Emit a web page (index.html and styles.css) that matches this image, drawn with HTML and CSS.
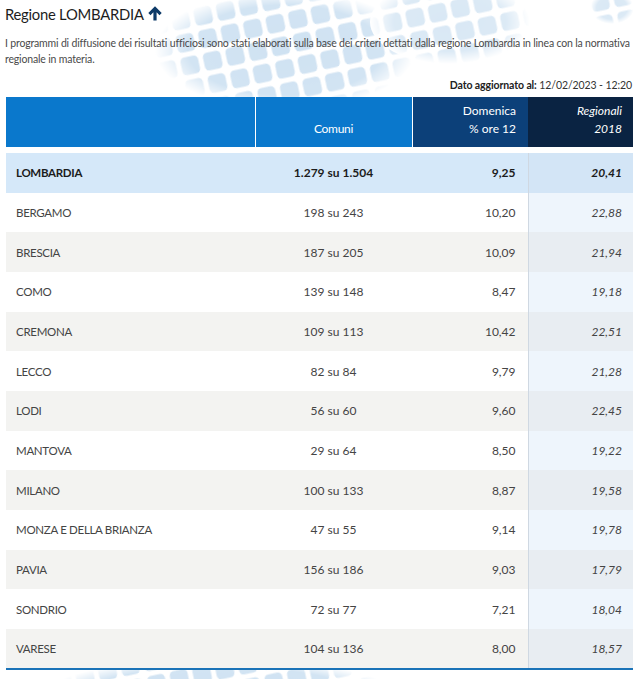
FILE: index.html
```html
<!DOCTYPE html>
<html lang="it">
<head>
<meta charset="utf-8">
<title>Regione LOMBARDIA</title>
<link rel="stylesheet" href="styles.css">
</head>
<body>
<div class="bg" aria-hidden="true">
  <svg width="640" height="679" viewBox="0 0 640 679">
    <defs>
      <pattern id="sq" patternUnits="userSpaceOnUse" width="23" height="23" patternTransform="rotate(-12)">
        <rect x="2.5" y="2.5" width="18" height="18" rx="4.5" fill="#cfe2f2"/>
      </pattern>
      <radialGradient id="rg">
        <stop offset="0" stop-color="#fff"/>
        <stop offset="0.75" stop-color="#eee"/>
        <stop offset="1" stop-color="#000"/>
      </radialGradient>
      <radialGradient id="rg2">
        <stop offset="0" stop-color="#ccc"/>
        <stop offset="0.7" stop-color="#bbb"/>
        <stop offset="1" stop-color="#000"/>
      </radialGradient>
      <mask id="m" maskUnits="userSpaceOnUse" x="0" y="0" width="640" height="679">
        <rect width="640" height="679" fill="#000"/>
        <ellipse cx="285" cy="50" rx="130" ry="60" fill="url(#rg)"/>
        <ellipse cx="450" cy="22" rx="80" ry="42" fill="url(#rg2)"/>
        <ellipse cx="612" cy="8" rx="22" ry="16" fill="url(#rg2)"/>
        <ellipse cx="220" cy="690" rx="170" ry="30" fill="url(#rg)"/>
      </mask>
    </defs>
    <rect width="640" height="679" fill="url(#sq)" mask="url(#m)"/>
  </svg>
</div>
<main class="page">
  <h1 class="title"><span>Regione LOMBARDIA</span>
    <svg class="arrow" width="14" height="15" viewBox="0 0 14 15" aria-hidden="true">
      <path d="M7 0.3 L13.7 7 L11.5 9.2 L8.6 6.3 V14.6 H5.4 V6.3 L2.5 9.2 L0.3 7 Z" fill="#0d3a68"/>
    </svg>
  </h1>
  <p class="desc">I programmi di diffusione dei risultati ufficiosi sono stati elaborati sulla base dei criteri dettati dalla regione Lombardia in linea con la normativa regionale in materia.</p>
  <p class="updated"><b>Dato aggiornato al:</b> 12/02/2023 - 12:20</p>
  <table class="results">
    <colgroup>
      <col class="w-name"><col class="w-com"><col class="w-dom"><col class="w-reg">
    </colgroup>
    <thead>
      <tr>
        <th class="h-name"></th>
        <th class="h-com">Comuni</th>
        <th class="h-dom">Domenica<br>% ore 12</th>
        <th class="h-reg">Regionali<br>2018</th>
      </tr>
    </thead>
    <tbody>
      <tr class="spacer"><td colspan="4"></td></tr>
      <tr class="total"><td class="name">LOMBARDIA</td><td class="com">1.279 su 1.504</td><td class="dom">9,25</td><td class="reg">20,41</td></tr>
      <tr><td class="name">BERGAMO</td><td class="com">198 su 243</td><td class="dom">10,20</td><td class="reg">22,88</td></tr>
      <tr class="alt"><td class="name">BRESCIA</td><td class="com">187 su 205</td><td class="dom">10,09</td><td class="reg">21,94</td></tr>
      <tr><td class="name">COMO</td><td class="com">139 su 148</td><td class="dom">8,47</td><td class="reg">19,18</td></tr>
      <tr class="alt"><td class="name">CREMONA</td><td class="com">109 su 113</td><td class="dom">10,42</td><td class="reg">22,51</td></tr>
      <tr><td class="name">LECCO</td><td class="com">82 su 84</td><td class="dom">9,79</td><td class="reg">21,28</td></tr>
      <tr class="alt"><td class="name">LODI</td><td class="com">56 su 60</td><td class="dom">9,60</td><td class="reg">22,45</td></tr>
      <tr><td class="name">MANTOVA</td><td class="com">29 su 64</td><td class="dom">8,50</td><td class="reg">19,22</td></tr>
      <tr class="alt"><td class="name">MILANO</td><td class="com">100 su 133</td><td class="dom">8,87</td><td class="reg">19,58</td></tr>
      <tr><td class="name">MONZA E DELLA BRIANZA</td><td class="com">47 su 55</td><td class="dom">9,14</td><td class="reg">19,78</td></tr>
      <tr class="alt"><td class="name">PAVIA</td><td class="com">156 su 186</td><td class="dom">9,03</td><td class="reg">17,79</td></tr>
      <tr><td class="name">SONDRIO</td><td class="com">72 su 77</td><td class="dom">7,21</td><td class="reg">18,04</td></tr>
      <tr class="alt last"><td class="name">VARESE</td><td class="com">104 su 136</td><td class="dom">8,00</td><td class="reg">18,57</td></tr>
    </tbody>
  </table>
</main>
</body>
</html>
```

FILE: styles.css
```css
html, body {
  margin: 0;
  padding: 0;
  background: #fff;
}
body {
  font-family: Lato, "Noto Sans", sans-serif;
  color: #444;
  position: relative;
  width: 640px;
  height: 679px;
  overflow: hidden;
}
.bg {
  position: absolute;
  left: 0;
  top: 0;
  z-index: 0;
  line-height: 0;
}
.page {
  position: relative;
  z-index: 1;
  padding: 4px 7px 0 6px;
}
.title {
  margin: 0;
  font-size: 14.8px;
  line-height: 20px;
  font-weight: 400;
  letter-spacing: -0.25px;
  color: #1d1d1d;
  display: flex;
  align-items: center;
  gap: 4px;
  margin-left: -1px;
}
.arrow {
  display: block;
  margin-top: -1px;
}
.desc {
  margin: 11px 0 0 -1px;
  font-size: 10.5px;
  line-height: 16px;
  color: #4a4a4a;
  letter-spacing: -0.17px;
}
.updated {
  margin: 10px 1px 0 0;
  font-size: 10.5px;
  line-height: 16px;
  letter-spacing: -0.1px;
  text-align: right;
  color: #333;
}
.updated b {
  font-weight: 700;
  color: #222;
}
.results {
  margin-top: 4px;
  width: 627px;
  border-collapse: collapse;
  table-layout: fixed;
  font-size: 12px;
}
.w-name { width: 249px; }
.w-com { width: 157px; }
.w-dom { width: 116px; }
.w-reg { width: 105px; }
.results th {
  height: 50px;
  padding: 0 0 9px;
  box-sizing: border-box;
  vertical-align: bottom;
  color: #fff;
  font-weight: 400;
  font-size: 12px;
  line-height: 18px;
}
.h-name { background: #0a78cc; }
.h-com { background: #0a78cc; border-left: 1px solid #fff; text-align: center; letter-spacing: -0.3px; }
.h-dom { background: #0c4079; border-left: 1px solid #fff; text-align: right; padding-right: 12px !important; }
.h-reg { background: #0a2342; text-align: right; font-style: italic; padding-right: 11px !important; }
.results td {
  height: 39.67px;
  padding: 0;
  box-sizing: border-box;
  vertical-align: middle;
  background: #fff;
}
.results tr.spacer td {
  height: 6px;
  padding: 0;
  background: transparent;
}
.results tr.alt td { background: #f3f3f1; }
.results tr.total td { background: #d5e8f9; font-weight: 700; color: #1c1c1c; }
.name {
  padding-left: 10px !important;
  font-size: 11.5px;
  letter-spacing: -0.3px;
}
.com { text-align: center; }
.dom { text-align: right; padding-right: 12px !important; }
.reg {
  text-align: right;
  padding-right: 11px !important;
  font-style: italic;
  border-left: 1px solid #cfd8e2;
}
.results tr td.reg { background: #eef5fc; }
.results tr.alt td.reg { background: #e8edf2; }
.results tr.total td.reg { background: #d3e5f6; }
.results tr.last td { border-bottom: 2px solid #1a73b8; }
.results tr.last td.reg { border-bottom: 2px solid #1a73b8; }
```
